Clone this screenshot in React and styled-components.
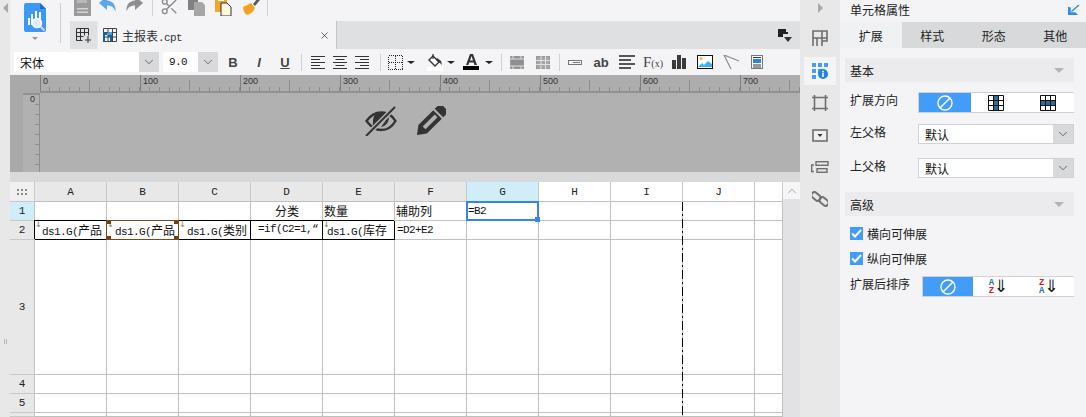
import React from 'react'
import styled, { createGlobalStyle } from 'styled-components'
import { ChevronDown, ChevronUp, Scissors, X } from 'lucide-react'

const CJK = '"Noto Sans CJK SC", "Liberation Sans", sans-serif'
const MONO = '"Liberation Mono", "Noto Sans CJK SC", monospace'

const GlobalStyle = createGlobalStyle`
    html, body { margin: 0; padding: 0; background: #f4f4f6; overflow: hidden; }
    * { box-sizing: border-box; }
`

const Page = styled.div`
    display: flex;
    width: 1086px;
    height: 417px;
    overflow: hidden;
    font-family: ${CJK};
    font-size: 12px;
    color: #222;
    background: #f4f4f6;
`
const EdgeBar = styled.div`
    width: 10px;
    flex: none;
    background: #e8e8e8;
    display: flex;
    flex-direction: column;
    align-items: center;
    padding-top: 3px;
`
const Triangle = styled.div`
    width: 0;
    height: 0;
    border-top: 5px solid transparent;
    border-bottom: 5px solid transparent;
    ${p => p.$right ? 'border-left: 5px solid #a8a8a8;' : 'border-right: 5px solid #a8a8a8;'}
`
const Grip = styled.div`
    width: 3px;
    height: 5px;
    margin-top: 326px;
    border-left: 1px solid #b4b4b4;
    border-right: 1px solid #b4b4b4;
`
const Main = styled.div`
    width: 790px;
    flex: none;
    display: flex;
    flex-direction: column;
`
const TopArea = styled.div`
    display: flex;
    height: 49px;
`
const LogoColumn = styled.div`
    width: 60px;
    flex: none;
    padding: 3px 9px 6px 0;
`
const LogoStack = styled.div`
    height: 40px;
    display: flex;
    flex-direction: column;
    align-items: center;
    gap: 5px;
    border-right: 1px solid #cfcfd2;
`
const SmallCaret = styled.div`
    width: 0;
    height: 0;
    border-left: 3px solid transparent;
    border-right: 3px solid transparent;
    border-top: 3px solid ${p => p.$color || '#999'};
`
const TopRight = styled.div`
    flex: 1;
    min-width: 0;
    display: flex;
    flex-direction: column;
`
const QuickBar = styled.div`
    height: 21px;
    display: flex;
    align-items: flex-end;
    padding: 0 0 5px 0;
    overflow: hidden;
`
const QuickIcon = styled.div`
    width: ${p => p.$w || 27}px;
    height: 20px;
    flex: none;
    display: flex;
    justify-content: center;
    align-items: flex-end;
`
const QuickSep = styled.div`
    width: 1px;
    height: 16px;
    flex: none;
    margin: 0 ${p => p.$r || 0}px 0 ${p => p.$l || 0}px;
    background: #d0d0d3;
`
const TabBar = styled.div`
    height: 28px;
    display: flex;
    align-items: stretch;
    background: #dfe0e2;
`
const NewTab = styled.div`
    width: 27px;
    display: flex;
    align-items: center;
    justify-content: center;
    flex: none;
`
const FileTab = styled.div`
    width: 240px;
    flex: none;
    display: flex;
    align-items: center;
    gap: 5px;
    padding: 0 6px 0 5px;
    background: #f4f4f6;
    border-right: 1px solid #c4c4c6;
    border-left: 1px solid #e8e8ea;
    font-family: ${MONO};
    font-size: 11px;
    letter-spacing: -0.6px;
    color: #333;
`
const Cjk = styled.span`
    font-family: ${CJK};
    font-size: 12px;
    letter-spacing: 0;
`
const Spread = styled.div`
    flex: 1;
`
const TabMenu = styled.div`
    width: 30px;
    display: flex;
    align-items: center;
    justify-content: center;
`
const FormatBar = styled.div`
    height: 26px;
    display: flex;
    align-items: center;
    padding-left: 4px;
    background: #f4f4f6;
`
const SelectBox = styled.div`
    width: ${p => p.$w}px;
    height: ${p => p.$h || 20}px;
    flex: none;
    margin-right: ${p => p.$mr || 0}px;
    display: flex;
    background: #fff;
    border: ${p => p.$outlined ? '1px solid #d0d1d5' : '0'};
`
const SelectText = styled.div`
    flex: 1;
    padding-left: 6px;
    display: flex;
    align-items: center;
    font-size: ${p => p.$mono ? 11 : 12}px;
    letter-spacing: ${p => p.$mono ? '-0.6px' : '0'};
    font-family: ${p => p.$mono ? MONO : CJK};
    color: #111;
`
const SelectButton = styled.div`
    width: 20px;
    flex: none;
    display: flex;
    align-items: center;
    justify-content: center;
    background: #d8d9db;
    color: #444;
`
const Slot = styled.div`
    width: ${p => p.$w || 26}px;
    flex: none;
    margin-left: ${p => p.$ml || 0}px;
    height: 20px;
    display: flex;
    align-items: center;
    justify-content: center;
`
const StyleLetter = styled.span`
    font: ${p => p.$italic ? 'italic' : 'normal'} bold 13px "Liberation Sans", sans-serif;
    color: #444;
    text-decoration: ${p => p.$under ? 'underline' : 'none'};
`
const AbText = styled.span`
    font: bold 13px "Liberation Sans", sans-serif;
    color: #444;
`
const FxText = styled.span`
    font: 15px "Liberation Serif", serif;
    color: #444;
    small { font-size: 10px; }
`
const ToolSep = styled.div`
    width: 1px;
    height: 17px;
    flex: none;
    margin: 0 ${p => p.$r || 0}px 0 ${p => p.$l || 0}px;
    background: #d0d0d3;
`
const DarkCaret = styled(SmallCaret)`
    border-left-width: 4px;
    border-right-width: 4px;
    border-top-width: 3px;
`
const Canvas = styled.div`
    position: relative;
    height: 97px;
    background: #b1b1b1;
    display: grid;
    grid-template-columns: 13px 17px 1fr;
    grid-template-rows: 18px 1fr;
    overflow: hidden;
`
const RulerCorner = styled.div`
    grid-column: 1 / 3;
    background: #a9a9a9;
    border-bottom: 2px solid #a9a9a9;
`
const Ruler = styled.div`
    display: flex;
    background: #adadad;
    border-bottom: 2px solid #919191;
    overflow: hidden;
`
const RulerMark = styled.div`
    width: 100px;
    flex: none;
    padding: 1px 0 0 3px;
    font: 9px "Liberation Sans", sans-serif;
    color: #333;
    background-image:
        repeating-linear-gradient(to right, transparent 0 9px, #8d8d8d 9px 10px),
        linear-gradient(#8d8d8d, #8d8d8d),
        linear-gradient(#7f7f7f, #7f7f7f);
    background-size: 100% 4px, 1px 11px, 1px 100%;
    background-repeat: no-repeat;
    background-position: left bottom, 49px bottom, 0 bottom;
`
const RulerGutter = styled.div`
    background: #a9a9a9;
`
const VerticalRuler = styled.div`
    background-color: #b1b1b1;
    background-image: repeating-linear-gradient(to bottom, transparent 0 9px, #8d8d8d 9px 10px);
    background-size: 4px 100%;
    background-repeat: no-repeat;
    background-position: right top;
    border-right: 1px solid #8d8d8d;
    border-top: 2px solid #919191;
    display: flex;
    justify-content: center;
`
const VerticalZero = styled.span`
    font: 9px "Liberation Sans", sans-serif;
    color: #333;
    writing-mode: vertical-rl;
    transform: rotate(90deg);
    height: 8px;
`
const CanvasNotice = styled.div`
    position: absolute;
    left: 0;
    right: 0;
    top: 31px;
    display: flex;
    justify-content: center;
    gap: 19px;
`
const Band = styled.div`
    height: 10px;
    background: #d8d9db;
`
const Sheet = styled.div`
    position: relative;
    flex: 1;
    display: grid;
    grid-template-columns: 25px repeat(10, 72px) 28px 17px;
    grid-template-rows: 20px 19px 19px 135px 19px 19px 4px;
    background: #fff;
    overflow: hidden;
`
const SheetCorner = styled.div`
    background: #f0f0f0;
    border-right: 1px solid #c8c8c8;
    border-bottom: 1px solid #c8c8c8;
    display: flex;
    align-items: center;
    justify-content: center;
`
const HeadCell = styled.div`
    background: ${p => p.$active ? '#cfeefa' : p.$plain ? '#fff' : '#e8e8e8'};
    border-right: 1px solid #c8c8c8;
    border-bottom: 1px solid #c0c0c0;
    display: flex;
    align-items: center;
    justify-content: center;
    font-family: ${MONO};
    font-size: 11px;
    color: #222;
`
const RowHead = styled.div`
    background: ${p => p.$active ? '#cfeefa' : '#e8e8e8'};
    border-right: 1px solid #c0c0c0;
    border-bottom: 1px solid #c8c8c8;
    display: flex;
    align-items: center;
    justify-content: center;
    font-family: ${MONO};
    font-size: 11px;
    color: #222;
`
const Cell = styled.div`
    position: relative;
    min-width: 0;
    overflow: ${p => p.$selected ? 'visible' : 'hidden'};
    padding: ${p => p.$wrap ? 1 : 0}px 0 0 ${p => p.$pad || 1}px;
    border-right: 1px solid ${p => p.$boxed ? '#000' : '#c0c0c0'};
    border-bottom: 1px solid ${p => p.$boxed ? '#000' : '#c0c0c0'};
    ${p => p.$boxed && 'box-shadow: -1px -1px 0 0 #000; z-index: 1;'}
    ${p => p.$selected && 'z-index: 2;'}
    line-height: ${p => p.$wrap ? 15 : 18}px;
    font-family: ${MONO};
    font-size: 11px;
    letter-spacing: -0.6px;
    color: #111;
    text-align: ${p => p.$center ? 'center' : 'left'};
    white-space: nowrap;
`
const CellMark = styled.span`
    position: absolute;
    left: 0;
    top: 0;
    font: bold 8px/8px "DejaVu Sans", sans-serif;
    letter-spacing: 0;
    color: #8a8a8a;
`
const BrownCorners = styled.div`
    position: absolute;
    inset: -1px;
    --c: #6e3f10;
    background:
        linear-gradient(var(--c), var(--c)) left top / 4px 3px no-repeat,
        linear-gradient(var(--c), var(--c)) right top / 4px 3px no-repeat,
        linear-gradient(var(--c), var(--c)) left bottom / 4px 3px no-repeat,
        linear-gradient(var(--c), var(--c)) right bottom / 4px 3px no-repeat;
    border: 1px solid #7a4a16;
`
const SelectedFrame = styled.div`
    position: absolute;
    inset: -1px;
    border: 2px solid #3586ec;
`
const FrameHandle = styled.div`
    position: absolute;
    right: -3px;
    bottom: -3px;
    width: 5px;
    height: 5px;
    background: #3586ec;
`
const PageBreak = styled.div`
    position: absolute;
    left: 672px;
    top: 20px;
    bottom: 0;
    width: 1px;
    z-index: 3;
    background: repeating-linear-gradient(to bottom, #000 0 9px, transparent 9px 12px, #000 12px 14px, transparent 14px 17px);
`
const Scrollbar = styled.div`
    grid-column: 13;
    grid-row: 1 / -1;
    background: #e2e2e4;
`
const ScrollUp = styled.div`
    height: 17px;
    background: #f6f6f7;
    display: flex;
    align-items: center;
    justify-content: center;
    color: #888;
`
const SideIcons = styled.div`
    width: 40px;
    flex: none;
    background: #e8e8e8;
    display: flex;
    flex-direction: column;
    align-items: center;
    padding-top: 3px;
`
const SideItem = styled.div`
    width: 32px;
    height: ${p => p.$h || 32}px;
    margin-top: ${p => p.$mt || 0}px;
    display: flex;
    align-items: center;
    justify-content: center;
    background: ${p => p.$active ? '#f4f4f6' : 'transparent'};
`
const Panel = styled.div`
    flex: 1;
    min-width: 0;
    display: flex;
    flex-direction: column;
    background: #f4f4f6;
`
const PanelTitle = styled.div`
    height: 22px;
    display: flex;
    align-items: center;
    justify-content: space-between;
    padding: 0 6px 3px 10px;
`
const PanelTabs = styled.div`
    height: 26px;
    display: grid;
    grid-template-columns: repeat(4, 1fr);
    background: #d8d9db;
`
const PanelTab = styled.div`
    display: flex;
    align-items: center;
    justify-content: center;
    background: ${p => p.$active ? '#f0f1f3' : 'transparent'};
`
const PanelBody = styled.div`
    padding: 10px 12px 0 5px;
`
const Section = styled.div`
    height: 24px;
    margin-top: ${p => p.$mt || 0}px;
    padding: 0 10px 0 5px;
    display: flex;
    align-items: center;
    justify-content: space-between;
    background: #ebebed;
`
const SectionCaret = styled(SmallCaret)`
    border-left-width: 5px;
    border-right-width: 5px;
    border-top-width: 5px;
    border-top-color: #b4b4b4;
`
const Field = styled.div`
    display: flex;
    margin-top: ${p => p.$mt}px;
    padding-left: 5px;
`
const FieldLabel = styled.div`
    width: ${p => p.$w || 68}px;
    flex: none;
    line-height: 15px;
`
const Segments = styled.div`
    flex: 1;
    height: 21px;
    display: grid;
    grid-template-columns: repeat(3, 1fr);
    background: #fff;
    border: 1px solid #d0d1d5;
    border-width: 1px 0 1px 1px;
`
const Segment = styled.div`
    display: flex;
    align-items: center;
    justify-content: center;
    background: ${p => p.$active ? '#429dfa' : 'transparent'};
`
const SortStack = styled.div`
    display: flex;
    flex-direction: column;
    font: bold 9px/8px ${MONO};
`
const SortLetter = styled.span`
    color: ${p => p.$red ? '#e8141c' : '#2f6f9f'};
`
const SortArrow = styled.span`
    font: 17px/17px "DejaVu Sans", sans-serif;
    color: #111;
`
const CheckRow = styled.div`
    display: flex;
    align-items: center;
    gap: 4px;
    height: 13px;
    margin-top: ${p => p.$mt}px;
    padding-left: 5px;
`
const CheckBox = styled.div`
    width: 13px;
    height: 13px;
    background: #429dfa;
    display: flex;
    align-items: center;
    justify-content: center;
`

const Logo = () => (
    <svg width="22" height="29" viewBox="0 0 22 29">
        <path d="M2 0H16L22 6V27a2 2 0 0 1-2 2H2a2 2 0 0 1-2-2V2a2 2 0 0 1 2-2z" fill="#3d97f5" />
        <path d="M16 0l6 6h-6z" fill="#1d6fc4" />
        <g fill="#fff">
            <rect x="4" y="15" width="2" height="7" />
            <rect x="7" y="11" width="2" height="11" />
            <rect x="11" y="8" width="2" height="8" />
            <rect x="15" y="9" width="2" height="7" />
        </g>
        <circle cx="13" cy="20" r="4.500" fill="#dceafa" stroke="#fff" strokeWidth="1.500" />
        <path d="M16.500 23.500l4 4" stroke="#d8d8d8" strokeWidth="2" />
    </svg>
)
const SaveIcon = () => (
    <svg width="17" height="20" viewBox="0 0 17 20">
        <path d="M0 1h14l3 3v16H0z" fill="#9b9b9b" />
        <rect x="3" y="1" width="10" height="6" fill="#b8b8b8" />
        <rect x="3" y="12" width="11" height="1.500" fill="#d4d4d4" />
        <rect x="3" y="15.500" width="11" height="1.500" fill="#d4d4d4" />
    </svg>
)
const ArrowIcon = ({ color, flip }) => (
    <svg width="17" height="20" viewBox="0 0 17 20" style={flip ? { transform: 'scaleX(-1)' } : undefined}>
        <path d="M0 7L8 0V4.500C14 5 17 9 16.500 15.500C15 11 12 9.500 8 9.500V14z" fill={color} />
    </svg>
)
const CopyIcon = () => (
    <svg width="17" height="20" viewBox="0 0 17 20">
        <path d="M0 0h8l2 3v11H0z" fill="#808080" />
        <path d="M6 6h8l3 3v11H6z" fill="#a6a6a6" />
    </svg>
)
const PasteIcon = () => (
    <svg width="17" height="20" viewBox="0 0 17 20">
        <rect x="0" y="0" width="12" height="16" fill="#f5a623" />
        <rect x="3" y="2" width="6" height="3" fill="#fff" />
        <path d="M6 7h6l4 4v9H6z" fill="#fdf7e2" stroke="#333" />
    </svg>
)
const BrushIcon = () => (
    <svg width="18" height="20" viewBox="0 0 18 20">
        <path d="M1 11C5 9 7 8 9 7l4 5c-1 3-4 6-8 7C3 18 1 15 1 11z" fill="#f2a41f" />
        <path d="M11 8l5-6 2 2-5 6z" fill="#5a5a5a" />
    </svg>
)
const AddGridIcon = () => (
    <svg width="16" height="15" viewBox="0 0 16 15" fill="none" stroke="#333">
        <path d="M.5 12.500V.5h12v7M.5 4.500h12M4.500.5v12M8.500.5v7M.5 8.500h7M.5 12.500h6M12 8v7M9 12h6" />
    </svg>
)
const ReportIcon = () => (
    <svg width="14" height="14" viewBox="0 0 14 14">
        <path d="M.5.5h13v13H.5zM.5 4.500h13M.5 9h13M5 .5v13M9.500.5v13" fill="none" stroke="#444" />
        <path d="M0 4h4v3H2v7H0zM5 7h4v7H7v-5H5z" fill="#15639e" />
        <path d="M5 4h4v3H5z" fill="#3fa0e0" />
    </svg>
)
const TabMenuIcon = () => (
    <svg width="14" height="13" viewBox="0 0 14 13">
        <path d="M0 0h8v3H3v5H0z" fill="#222" />
        <path d="M3 3h7v2H5v3H3z" fill="#222" />
        <path d="M6 8h8l-4 5z" fill="#333" />
    </svg>
)
const AlignIcon = ({ mode }) => {
    const short = mode === 'left' ? 'M0 3.500h9M0 9.500h9' : mode === 'right' ? 'M5 3.500h9M5 9.500h9' : 'M2.500 3.500h9M2.500 9.500h9'
    return (
        <svg width="14" height="13" viewBox="0 0 14 13" stroke="#333">
            <path d={`M0 .5h14M0 6.500h14M0 12.500h14 ${short}`} />
        </svg>
    )
}
const BorderIcon = () => (
    <svg width="15" height="15" viewBox="0 0 15 15" fill="none" stroke="#222" strokeDasharray="1 1" shapeRendering="crispEdges">
        <path d="M.5.5h14v14H.5zM.5 7.500h14M7.500.5v14" />
    </svg>
)
const FillIcon = () => (
    <svg width="16" height="17" viewBox="0 0 16 17">
        <path d="M2 6l4-4 6 6-4 4z" fill="#fff" stroke="#333" strokeWidth="1.400" />
        <path d="M6 0v5" stroke="#333" strokeWidth="1.200" />
        <path d="M10 4l4 3 1 4-2-2-4-3z" fill="#333" />
        <rect x="0" y="13" width="16" height="4" fill="#fff" />
    </svg>
)
const FontColorIcon = () => (
    <svg width="16" height="16" viewBox="0 0 16 16">
        <path d="M7 0h3l4 11h-2.500l-.8-2.500H6.200L5.400 11H3zM7 6.500h3L8.500 2z" fill="#333" fillRule="evenodd" />
        <rect x="0" y="12" width="16" height="4" fill="#000" />
    </svg>
)
const MergeIcon = ({ split }) => (
    <svg width="14" height="13" viewBox="0 0 14 13">
        <rect x=".5" y=".5" width="13" height="12" fill={split ? '#a6a6a6' : '#8f8f8f'} stroke="#999" />
        {split
            ? <path d="M0 4.500h14M0 8.500h14M5 0v13M9.500 0v13" stroke="#e0e0e0" />
            : <path d="M0 3h14M0 10h14M3 0v3M11 0v3M3 10v3M11 10v3" stroke="#e0e0e0" />}
    </svg>
)
const WidgetIcon = () => (
    <svg width="14" height="5" viewBox="0 0 14 5">
        <rect x=".5" y=".5" width="13" height="4" fill="none" stroke="#777" />
        <rect x="5" y="2" width="7" height="1" fill="#777" />
    </svg>
)
const LinesIcon = () => (
    <svg width="16" height="14" viewBox="0 0 16 14" fill="#555">
        <rect width="16" height="2" />
        <rect y="4" width="12" height="2" />
        <rect y="8" width="16" height="2" />
        <rect y="12" width="12" height="2" />
    </svg>
)
const BarsIcon = () => (
    <svg width="14" height="14" viewBox="0 0 14 14" fill="#3a3a3a">
        <rect y="5" width="4" height="9" />
        <rect x="5" width="4" height="14" />
        <rect x="10" y="3" width="4" height="11" />
    </svg>
)
const PictureIcon = () => (
    <svg width="16" height="14" viewBox="0 0 16 14">
        <rect x=".5" y=".5" width="15" height="13" fill="#fff" stroke="#111" />
        <circle cx="4" cy="3.500" r="1.500" fill="#f6b73c" />
        <path d="M1 12l4-4 2 2 4-4 4 3v3z" fill="#35b4ef" />
    </svg>
)
const ShapeIcon = () => (
    <svg width="17" height="15" viewBox="0 0 17 15" fill="none" stroke="#8c8c8c" strokeWidth="1.200">
        <path d="M16 6L1 0l7 14" />
    </svg>
)
const FormIcon = () => (
    <svg width="12" height="14" viewBox="0 0 12 14">
        <rect x=".5" y=".5" width="11" height="13" fill="#fff" stroke="#777" />
        <rect x="2" y="2" width="8" height="1" fill="#333" />
        <rect x="2" y="4" width="8" height="4" fill="#2a86d8" />
        <path d="M2 10h8M2 12h8" stroke="#333" />
    </svg>
)
const EyeOffIcon = () => (
    <svg width="32" height="30" viewBox="0 0 32 30" fill="none">
        <path d="M1.500 15C6 8.500 11 6.500 16.500 6.500S27 9 30.500 15C27 21 21.500 24 16 24S6 21 1.500 15z" stroke="#333" strokeWidth="2.400" />
        <path d="M8 15a8 8.500 0 0 1 13-7L9 21.500A8 8 0 0 1 8 15z" fill="#333" />
        <path d="M21 14l3-3c0 5-3 9-8 10z" fill="#333" />
        <path d="M30 1L1 30" stroke="#b1b1b1" strokeWidth="5" />
        <path d="M30 1L1 30" stroke="#333" strokeWidth="2" />
    </svg>
)
const PencilIcon = () => (
    <svg width="30" height="30" viewBox="0 0 30 30">
        <g transform="translate(1 29) rotate(-45)">
            <path d="M0 0L8-6H29V6H8z" fill="#333" />
            <rect x="10" y="-2" width="17" height="4" fill="#b1b1b1" />
            <path d="M31-6h3a5 5 0 0 1 5 5v2a5 5 0 0 1-5 5h-3z" fill="#333" />
        </g>
    </svg>
)
const GripDots = () => (
    <svg width="12" height="8" viewBox="0 0 12 8" fill="#8a8a8a">
        {[0, 1, 2].flatMap(x => [0, 1].map(y => <rect key={`${x}${y}`} x={x * 4 + 1} y={y * 4 + 1} width="2" height="2" />))}
    </svg>
)
const FreezeIcon = () => (
    <svg width="16" height="16" viewBox="0 0 16 16" fill="none" stroke="#6f6f6f" strokeWidth="1.600">
        <path d="M1 16V1h14v7H1M5 8v8M10 1v15M15 8v3H10" />
    </svg>
)
const InfoGridIcon = () => (
    <svg width="16" height="16" viewBox="0 0 16 16" fill="#429dfa">
        <rect width="4" height="4" /><rect x="6" width="4" height="4" /><rect x="12" width="4" height="4" />
        <rect y="6" width="4" height="4" /><rect x="6" y="6" width="4" height="4" />
        <rect y="12" width="4" height="4" />
        <circle cx="11" cy="11" r="5" fill="#1f84e6" />
        <rect x="10.200" y="7.800" width="1.600" height="1.600" fill="#fff" />
        <rect x="10.200" y="10" width="1.600" height="4" fill="#fff" />
    </svg>
)
const FrameIcon = () => (
    <svg width="16" height="16" viewBox="0 0 16 16" fill="none" stroke="#6f6f6f" strokeWidth="1.600">
        <path d="M0 2.500h16M0 13.500h16M2.500 0v16M13.500 0v16" />
    </svg>
)
const DropBoxIcon = () => (
    <svg width="16" height="13" viewBox="0 0 16 13">
        <rect x="1" y="1" width="14" height="11" fill="#f0f0f0" stroke="#6f6f6f" strokeWidth="1.600" />
        <path d="M5.500 5h5L8 8z" fill="#333" />
    </svg>
)
const BlockIcon = () => (
    <svg width="18" height="13" viewBox="0 0 18 13" fill="none" stroke="#6f6f6f" strokeWidth="1.400">
        <path d="M3 4H.7v6.500H3" />
        <rect x="5" y=".7" width="12" height="3.600" />
        <rect x="6" y="7.700" width="10" height="3.600" />
    </svg>
)
const LinkIcon = () => (
    <svg width="16" height="16" viewBox="0 0 16 16" fill="none" stroke="#6f6f6f" strokeWidth="2">
        <rect x="-1" y="2.500" width="10" height="6" rx="3" transform="rotate(40 4 5.500)" />
        <rect x="7" y="7.500" width="10" height="6" rx="3" transform="rotate(40 12 10.500)" />
    </svg>
)
const CollapseIcon = () => (
    <svg width="12" height="10" viewBox="0 0 12 10">
        <path d="M11 0L3.500 6.500M0 2.500V10h9L7 8H2V3z" fill="#2f8fe8" stroke="#2f8fe8" strokeWidth="1.500" />
    </svg>
)
const NoneIcon = () => (
    <svg width="16" height="16" viewBox="0 0 16 16" fill="none" stroke="#fff" strokeWidth="1.400">
        <circle cx="8" cy="8" r="7" />
        <path d="M3 13L13 3" />
    </svg>
)
const GridPick = ({ cells }) => (
    <svg width="16" height="16" viewBox="0 0 16 16">
        {cells.map(([x, y]) => <rect key={`${x}${y}`} x={x * 5 + .5} y={y * 5 + .5} width="5" height="5" fill="#2b6c99" />)}
        <path d="M.5.5h15v15H.5zM.5 5.500h15M.5 10.500h15M5.500.5v15M10.500.5v15" fill="none" stroke="#111" />
    </svg>
)
const CheckMark = () => (
    <svg width="11" height="9" viewBox="0 0 11 9" fill="none" stroke="#fff" strokeWidth="2">
        <path d="M1 4.500l3 3 6-6.500" />
    </svg>
)

const COLUMNS = ['A', 'B', 'C', 'D', 'E', 'F', 'G', 'H', 'I', 'J', '']
const ROWS = [1, 2, 3, 4, 5, 6]
const RULER = [0, 100, 200, 300, 400, 500, 600, 700, 800]

const CELLS = {
    D1: { center: true, body: <Cjk>分类</Cjk> },
    E1: { body: <Cjk>数量</Cjk> },
    F1: { body: <Cjk>辅助列</Cjk> },
    G1: { active: true, body: '=B2' },
    A2: { boxed: true, mark: true, pad: 7, body: <>ds1.G(<Cjk>产品</Cjk></> },
    B2: { boxed: true, mark: true, corners: true, pad: 8, body: <>ds1.G(<Cjk>产品</Cjk></> },
    C2: { boxed: true, mark: true, pad: 8, body: <>ds1.G(<Cjk>类别</Cjk></> },
    D2: { boxed: true, wrap: true, pad: 7, body: <>=if(C2=1,“<br />　“　”</> },
    E2: { boxed: true, mark: true, wrap: true, pad: 4, body: <>ds1.G(<Cjk>库存</Cjk><br /><Cjk>量</Cjk></> },
    F2: { pad: 2, body: '=D2+E2' },
}

export default function App() {
    return (
        <Page>
            <GlobalStyle />
            <EdgeBar>
                <Triangle />
                <Grip />
            </EdgeBar>
            <Main>
                <TopArea>
                    <LogoColumn>
                        <LogoStack>
                            <Logo />
                            <SmallCaret />
                        </LogoStack>
                    </LogoColumn>
                    <TopRight>
                        <QuickBar>
                            <QuickIcon $w={24}><SaveIcon /></QuickIcon>
                            <QuickIcon><ArrowIcon color="#5ba7e8" /></QuickIcon>
                            <QuickIcon><ArrowIcon color="#8f8f8f" flip /></QuickIcon>
                            <QuickSep $l={4} $r={3} />
                            <QuickIcon><Scissors size={19} color="#8a8a8a" strokeWidth={1.7} /></QuickIcon>
                            <QuickIcon><CopyIcon /></QuickIcon>
                            <QuickIcon><PasteIcon /></QuickIcon>
                            <QuickIcon><BrushIcon /></QuickIcon>
                            <QuickSep $l={3} />
                        </QuickBar>
                        <TabBar>
                            <NewTab><AddGridIcon /></NewTab>
                            <FileTab>
                                <ReportIcon />
                                <span><Cjk>主报表</Cjk>.cpt</span>
                                <Spread />
                                <X size={11} color="#333" strokeWidth={1.6} />
                            </FileTab>
                            <Spread />
                            <TabMenu><TabMenuIcon /></TabMenu>
                        </TabBar>
                    </TopRight>
                </TopArea>
                <FormatBar>
                    <SelectBox $w={145} $mr={4}>
                        <SelectText>宋体</SelectText>
                        <SelectButton><ChevronDown size={14} strokeWidth={1.3} /></SelectButton>
                    </SelectBox>
                    <SelectBox $w={55} $mr={2}>
                        <SelectText $mono>9.0</SelectText>
                        <SelectButton><ChevronDown size={14} strokeWidth={1.3} /></SelectButton>
                    </SelectBox>
                    <Slot><StyleLetter>B</StyleLetter></Slot>
                    <Slot><StyleLetter $italic>I</StyleLetter></Slot>
                    <Slot><StyleLetter $under>U</StyleLetter></Slot>
                    <ToolSep $l={3} $r={5} />
                    <Slot $w={22}><AlignIcon mode="left" /></Slot>
                    <Slot $w={22}><AlignIcon mode="center" /></Slot>
                    <Slot $w={22}><AlignIcon mode="right" /></Slot>
                    <ToolSep $l={7} $r={6} />
                    <Slot $w={16}><BorderIcon /></Slot>
                    <Slot $w={16}><DarkCaret $color="#222" /></Slot>
                    <Slot $w={24} $ml={4}><FillIcon /></Slot>
                    <Slot $w={8}><DarkCaret $color="#222" /></Slot>
                    <Slot $w={24} $ml={4}><FontColorIcon /></Slot>
                    <Slot $w={10} $ml={1}><DarkCaret $color="#222" /></Slot>
                    <ToolSep $l={7} $r={2} />
                    <Slot><MergeIcon /></Slot>
                    <Slot><MergeIcon split /></Slot>
                    <ToolSep $l={3} $r={2} />
                    <Slot><WidgetIcon /></Slot>
                    <Slot><AbText>ab</AbText></Slot>
                    <Slot><LinesIcon /></Slot>
                    <Slot><FxText>F<small>(x)</small></FxText></Slot>
                    <Slot><BarsIcon /></Slot>
                    <Slot><PictureIcon /></Slot>
                    <Slot><ShapeIcon /></Slot>
                    <Slot><FormIcon /></Slot>
                </FormatBar>
                <Canvas>
                    <RulerCorner />
                    <Ruler>
                        {RULER.map(n => <RulerMark key={n}>{n}</RulerMark>)}
                    </Ruler>
                    <RulerGutter />
                    <VerticalRuler><VerticalZero>0</VerticalZero></VerticalRuler>
                    <CanvasNotice>
                        <EyeOffIcon />
                        <PencilIcon />
                    </CanvasNotice>
                </Canvas>
                <Band />
                <Sheet>
                    <SheetCorner><GripDots /></SheetCorner>
                    {COLUMNS.map((c, i) => (
                        <HeadCell key={c || 'rest'} $active={c === 'G'} $plain={i > 6}>{c}</HeadCell>
                    ))}
                    <Scrollbar>
                        <ScrollUp><ChevronUp size={14} strokeWidth={1.3} /></ScrollUp>
                    </Scrollbar>
                    {ROWS.map(r => (
                        <React.Fragment key={r}>
                            <RowHead $active={r === 1}>{r < 6 ? r : ''}</RowHead>
                            {COLUMNS.map(c => {
                                const cell = CELLS[`${c}${r}`] || {}
                                return (
                                    <Cell
                                        key={c || 'rest'}
                                        $boxed={cell.boxed}
                                        $center={cell.center}
                                        $wrap={cell.wrap}
                                        $pad={cell.pad}
                                        $selected={cell.active || cell.corners}
                                    >
                                        {cell.mark && <CellMark>↓</CellMark>}
                                        {cell.body}
                                        {cell.corners && <BrownCorners />}
                                        {cell.active && <SelectedFrame><FrameHandle /></SelectedFrame>}
                                    </Cell>
                                )
                            })}
                        </React.Fragment>
                    ))}
                    <PageBreak />
                </Sheet>
            </Main>
            <SideIcons>
                <Triangle $right />
                <SideItem $mt={9}><FreezeIcon /></SideItem>
                <SideItem $h={28} $mt={3} $active><InfoGridIcon /></SideItem>
                <SideItem $mt={2}><FrameIcon /></SideItem>
                <SideItem><DropBoxIcon /></SideItem>
                <SideItem><BlockIcon /></SideItem>
                <SideItem><LinkIcon /></SideItem>
            </SideIcons>
            <Panel>
                <PanelTitle>
                    <span>单元格属性</span>
                    <CollapseIcon />
                </PanelTitle>
                <PanelTabs>
                    <PanelTab $active>扩展</PanelTab>
                    <PanelTab>样式</PanelTab>
                    <PanelTab>形态</PanelTab>
                    <PanelTab>其他</PanelTab>
                </PanelTabs>
                <PanelBody>
                    <Section>基本<SectionCaret /></Section>
                    <Field $mt={10}>
                        <FieldLabel>扩展方向</FieldLabel>
                        <Segments>
                            <Segment $active><NoneIcon /></Segment>
                            <Segment><GridPick cells={[[1, 0], [1, 1], [1, 2]]} /></Segment>
                            <Segment><GridPick cells={[[0, 1], [1, 1], [2, 1]]} /></Segment>
                        </Segments>
                    </Field>
                    <Field $mt={11}>
                        <FieldLabel>左父格</FieldLabel>
                        <SelectBox $w={156} $outlined>
                            <SelectText>默认</SelectText>
                            <SelectButton><ChevronDown size={14} strokeWidth={1.3} /></SelectButton>
                        </SelectBox>
                    </Field>
                    <Field $mt={14}>
                        <FieldLabel>上父格</FieldLabel>
                        <SelectBox $w={156} $outlined>
                            <SelectText>默认</SelectText>
                            <SelectButton><ChevronDown size={14} strokeWidth={1.3} /></SelectButton>
                        </SelectBox>
                    </Field>
                    <Section $mt={14}>高级<SectionCaret /></Section>
                    <CheckRow $mt={11}><CheckBox><CheckMark /></CheckBox>横向可伸展</CheckRow>
                    <CheckRow $mt={12}><CheckBox><CheckMark /></CheckBox>纵向可伸展</CheckRow>
                    <Field $mt={11}>
                        <FieldLabel $w={72}>扩展后排序</FieldLabel>
                        <Segments>
                            <Segment $active><NoneIcon /></Segment>
                            <Segment>
                                <SortStack><SortLetter>A</SortLetter><SortLetter $red>Z</SortLetter></SortStack>
                                <SortArrow>⇓</SortArrow>
                            </Segment>
                            <Segment>
                                <SortStack><SortLetter $red>Z</SortLetter><SortLetter>A</SortLetter></SortStack>
                                <SortArrow>⇓</SortArrow>
                            </Segment>
                        </Segments>
                    </Field>
                </PanelBody>
            </Panel>
        </Page>
    )
}
